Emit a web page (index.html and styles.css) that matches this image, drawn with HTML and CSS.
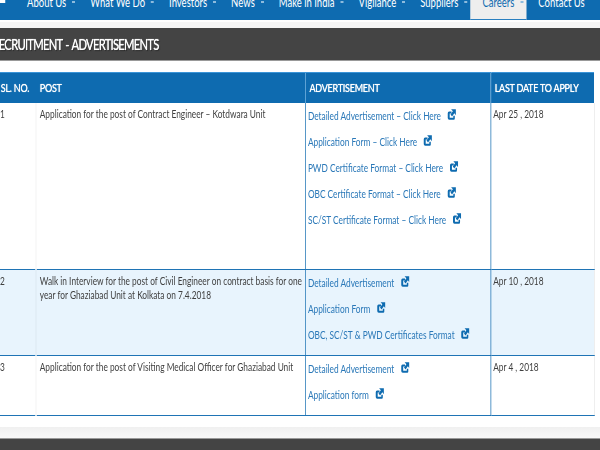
FILE: index.html
```html
<!DOCTYPE html>
<html lang="en">
<head>
<meta charset="utf-8">
<title>Recruitment - Advertisements</title>
<link rel="stylesheet" href="styles.css">
</head>
<body>
<svg class="sprite" width="0" height="0" aria-hidden="true">
  <symbol id="ext" viewBox="0 0 12 11">
    <path d="M2.800 2.400H6V4.400H3.600V8.800H8.400V6.800H10.400V9.400Q10.400 10.800 9 10.800H3Q1 10.800 1 9V4.200Q1 2.400 2.800 2.400Z" fill="currentColor"/>
    <path d="M5.500 0.200H11.800V6.200L9.800 4.300 6.700 7.400 4.700 5.400 7.800 2.300Z" fill="currentColor"/>
  </symbol>
</svg>
<div class="page">
<nav class="nav">
  <a class="nav-item home"></a>
  <a class="nav-item">About Us<i class="caret"></i></a>
  <a class="nav-item">What We Do<i class="caret"></i></a>
  <a class="nav-item">Investors<i class="caret"></i></a>
  <a class="nav-item">News<i class="caret"></i></a>
  <a class="nav-item">Make in India<i class="caret"></i></a>
  <a class="nav-item">Vigilance<i class="caret"></i></a>
  <a class="nav-item">Suppliers<i class="caret"></i></a>
  <a class="nav-item active">Careers<i class="caret"></i></a>
  <a class="nav-item">Contact Us</a>
</nav>
<div class="strip"></div>
<h1 class="title">RECRUITMENT - ADVERTISEMENTS</h1>
<main class="content">
<table class="table">
  <colgroup><col class="c1"><col class="c2"><col class="c3"><col class="c4"></colgroup>
  <thead>
    <tr><th class="sl">SL. NO.</th><th>POST</th><th class="blue">ADVERTISEMENT</th><th class="blue">LAST DATE TO APPLY</th></tr>
  </thead>
  <tbody>
    <tr class="r1">
      <td class="sl">1</td>
      <td class="post">Application for the post of Contract Engineer – Kotdwara Unit</td>
      <td class="ads">
        <a>Detailed Advertisement – Click Here<svg class="ic"><use href="#ext"/></svg></a>
        <a>Application Form – Click Here<svg class="ic"><use href="#ext"/></svg></a>
        <a>PWD Certificate Format – Click Here<svg class="ic"><use href="#ext"/></svg></a>
        <a>OBC Certificate Format – Click Here<svg class="ic"><use href="#ext"/></svg></a>
        <a>SC/ST Certificate Format – Click Here<svg class="ic"><use href="#ext"/></svg></a>
      </td>
      <td>Apr 25 , 2018</td>
    </tr>
    <tr class="r2">
      <td class="sl">2</td>
      <td class="post">Walk in Interview for the post of Civil Engineer on contract basis for one year for Ghaziabad Unit at Kolkata on 7.4.2018</td>
      <td class="ads">
        <a>Detailed Advertisement<svg class="ic"><use href="#ext"/></svg></a>
        <a>Application Form<svg class="ic"><use href="#ext"/></svg></a>
        <a>OBC, SC/ST &amp; PWD Certificates Format<svg class="ic"><use href="#ext"/></svg></a>
      </td>
      <td>Apr 10 , 2018</td>
    </tr>
    <tr class="r3">
      <td class="sl">3</td>
      <td class="post">Application for the post of Visiting Medical Officer for Ghaziabad Unit</td>
      <td class="ads">
        <a>Detailed Advertisement<svg class="ic"><use href="#ext"/></svg></a>
        <a>Application form<svg class="ic"><use href="#ext"/></svg></a>
      </td>
      <td>Apr 4 , 2018</td>
    </tr>
  </tbody>
</table>
</main>
<div class="band"></div>
<footer class="footer"></footer>
</div>
</body>
</html>
```
FILE: styles.css
```css
html, body { margin: 0; padding: 0; width: 600px; height: 450px; overflow: hidden; background: #fff; }
body { font-family: Lato, "Liberation Sans", sans-serif; font-size: 11.1px; color: #3f3f3f; }
.sprite { position: absolute; }
.page { width: 800px; height: 450px; overflow: hidden; transform: scaleX(0.75); transform-origin: left top; }
.nav { display: flex; height: 20px; background: #0e6bb0; overflow: hidden; }
.nav-item { display: flex; align-items: center; height: 20px; box-sizing: border-box; padding: 0 4px 16px 16px; color: #fff; font-size: 12.7px; white-space: nowrap; }
.home { width: 20px; padding: 0; position: relative; }
.home::before { content: ""; position: absolute; left: 0; top: 0; width: 7px; height: 3px; background: #fff; }
.nav-item.active { background: #eee; color: #0e6bb0; border-bottom: 1px solid #2a7fc0; }
.caret { display: inline-block; width: 4px; height: 2px; margin: 0 0 0 8px; background: #8dbbdd; }
.strip { height: 8px; background: linear-gradient(#fff 0 2px, #f6f6f6 2px); }
.title { margin: 0 0 0 -10px; height: 33px; box-sizing: border-box; background: #444; color: #fff; font-size: 15px; font-weight: 400; line-height: 33px; letter-spacing: -1px; word-spacing: 1.500px; text-shadow: 0 0 1px #fff, 1px 1px 1px #222; border-bottom: 1px solid #999; }
.content { padding: 11px 0 0; height: 366px; box-sizing: border-box; }
.table { width: 792px; margin: 0; border-collapse: collapse; table-layout: fixed; }
.c1 { width: 48px; } .c2 { width: 359px; } .c3 { width: 247px; } .c4 { width: 138px; }
th { background: #0e6bb0; color: #fff; height: 30px; box-sizing: border-box; padding: 0 5px; text-align: left; font-size: 12px; font-weight: 400; letter-spacing: -0.3px; border-top: 1px solid #3a94d8; text-shadow: 0 0 1px #fff; white-space: nowrap; }
th.sl { padding-left: 1px; }
th.blue { border-left: 1px solid #6aacdc; }
td { vertical-align: top; padding: 4px; line-height: 14px; border-left: 2px solid rgba(0, 0, 0, 0.03); }
td.post { padding-right: 0; }
td.sl { padding-left: 0; border-left: 0; }
td.ads, td.ads + td { border-left: 1px solid #1f74b5; }
td.ads { padding: 5px 3px 0; }
td.ads + td { border-right: 1px solid #e8e8e8; padding-left: 3px; }
.r1 { height: 167px; } .r2 { height: 86px; } .r3 { height: 60px; }
tbody td { border-bottom: 1px solid #1f74b5; }
.r2 td { background: #e8f4fd; }
.ads a { display: flex; align-items: flex-start; height: 26px; line-height: 15px; color: #2a78b8; white-space: nowrap; }
.ic { width: 12px; height: 11px; margin: 1px 0 0 8px; color: #0e6bb0; }
.band { height: 11px; background: linear-gradient(#f0f0f0, #f8f8f8); }
.footer { height: 13px; background: #444; border-top: 1px solid #999; }
```
